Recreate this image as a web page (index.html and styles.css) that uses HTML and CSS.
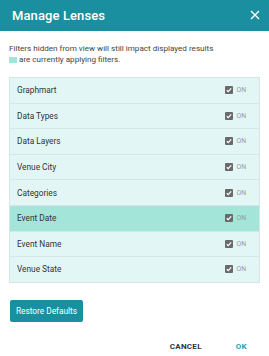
FILE: index.html
```html
<!DOCTYPE html>
<html>
<head>
<meta charset="utf-8">
<link rel="stylesheet" href="styles.css">
</head>
<body>
<div class="dialog">
  <div class="header">
    <span class="title">Manage Lenses</span>
    <svg class="close" width="10" height="10" viewBox="0 0 10 10"><path d="M1 1 L9 9 M9 1 L1 9" stroke="#fff" stroke-width="1.4" fill="none"/></svg>
  </div>
  <div class="desc">
    <div>Filters hidden from view will still impact displayed results</div>
    <div class="legend"><span class="swatch"></span>are currently applying filters.</div>
  </div>
  <div class="list">
    <div class="row"><span class="name">Graphmart</span><span class="toggle"><span class="cb"><svg width="8" height="8" viewBox="0 0 8 8"><path d="M1.8 4.2 L3.2 5.6 L6.2 2.4" stroke="#fff" stroke-width="1.3" fill="none"/></svg></span><span class="on">ON</span></span></div>
    <div class="row"><span class="name">Data Types</span><span class="toggle"><span class="cb"><svg width="8" height="8" viewBox="0 0 8 8"><path d="M1.8 4.2 L3.2 5.6 L6.2 2.4" stroke="#fff" stroke-width="1.3" fill="none"/></svg></span><span class="on">ON</span></span></div>
    <div class="row"><span class="name">Data Layers</span><span class="toggle"><span class="cb"><svg width="8" height="8" viewBox="0 0 8 8"><path d="M1.8 4.2 L3.2 5.6 L6.2 2.4" stroke="#fff" stroke-width="1.3" fill="none"/></svg></span><span class="on">ON</span></span></div>
    <div class="row"><span class="name">Venue City</span><span class="toggle"><span class="cb"><svg width="8" height="8" viewBox="0 0 8 8"><path d="M1.8 4.2 L3.2 5.6 L6.2 2.4" stroke="#fff" stroke-width="1.3" fill="none"/></svg></span><span class="on">ON</span></span></div>
    <div class="row"><span class="name">Categories</span><span class="toggle"><span class="cb"><svg width="8" height="8" viewBox="0 0 8 8"><path d="M1.8 4.2 L3.2 5.6 L6.2 2.4" stroke="#fff" stroke-width="1.3" fill="none"/></svg></span><span class="on">ON</span></span></div>
    <div class="row active"><span class="name">Event Date</span><span class="toggle"><span class="cb"><svg width="8" height="8" viewBox="0 0 8 8"><path d="M1.8 4.2 L3.2 5.6 L6.2 2.4" stroke="#fff" stroke-width="1.3" fill="none"/></svg></span><span class="on">ON</span></span></div>
    <div class="row"><span class="name">Event Name</span><span class="toggle"><span class="cb"><svg width="8" height="8" viewBox="0 0 8 8"><path d="M1.8 4.2 L3.2 5.6 L6.2 2.4" stroke="#fff" stroke-width="1.3" fill="none"/></svg></span><span class="on">ON</span></span></div>
    <div class="row"><span class="name">Venue State</span><span class="toggle"><span class="cb"><svg width="8" height="8" viewBox="0 0 8 8"><path d="M1.8 4.2 L3.2 5.6 L6.2 2.4" stroke="#fff" stroke-width="1.3" fill="none"/></svg></span><span class="on">ON</span></span></div>
  </div>
  <div class="restore-wrap"><button class="restore">Restore Defaults</button></div>
  <div class="footer">
    <button class="btn cancel">CANCEL</button>
    <button class="btn ok">OK</button>
  </div>
</div>
</body>
</html>
```
FILE: styles.css
```css
html, body {
  margin: 0;
  padding: 0;
  background: #fff;
}
body {
  font-family: Roboto, "Liberation Sans", sans-serif;
  width: 269px;
  height: 356px;
  overflow: hidden;
}
.dialog {
  display: flex;
  flex-direction: column;
}
.header {
  height: 31px;
  background: #1a8fa0;
  display: flex;
  align-items: center;
  justify-content: space-between;
  padding: 0 9px 0 12px;
}
.title {
  color: #fff;
  font-size: 13px;
  font-weight: 500;
  letter-spacing: 0.1px;
}
.close {
  display: block;
  margin-top: -2px;
}
.desc {
  padding: 12px 9px 0;
  font-size: 8.1px;
  line-height: 11px;
  color: #444;
}
.legend {
  display: flex;
  align-items: center;
}
.swatch {
  display: inline-block;
  width: 8px;
  height: 6px;
  background: #a3e6d9;
  margin-right: 2px;
}
.list {
  margin: 12px 9px 0;
  border: 1px solid #d6e6e6;
  border-top: 0;
  background: #e3f6f6;
}
.row {
  height: 25.6px;
  box-sizing: border-box;
  border-top: 1px solid #d6e6e6;
  display: flex;
  align-items: center;
  justify-content: space-between;
  padding: 0 13px 0 7px;
}
.row.active {
  background: #a3e6d9;
}
.name {
  font-size: 8.3px;
  color: #333;
}
.toggle {
  display: flex;
  align-items: center;
}
.cb {
  width: 8px;
  height: 8px;
  background: #6a6a6a;
  border-radius: 1px;
  display: flex;
  margin-right: 3px;
}
.cb svg {
  display: block;
}
.on {
  font-size: 6.8px;
  color: #999;
}
.restore-wrap {
  padding: 16px 10px 0;
}
.restore {
  width: 73px;
  height: 22px;
  border: 0;
  border-radius: 2px;
  background: #1a8fa0;
  color: #fff;
  font-family: Roboto, "Liberation Sans", sans-serif;
  font-size: 8.3px;
  padding: 0;
  cursor: pointer;
}
.footer {
  display: flex;
  justify-content: flex-end;
  align-items: center;
  padding: 19px 22px 0 0;
  gap: 34px;
}
.btn {
  border: 0;
  background: none;
  padding: 0;
  font-family: Roboto, "Liberation Sans", sans-serif;
  font-size: 8px;
  font-weight: 700;
  letter-spacing: 0.3px;
  line-height: 12px;
}
.cancel {
  color: #333;
}
.ok {
  color: #2a9db0;
}
```
